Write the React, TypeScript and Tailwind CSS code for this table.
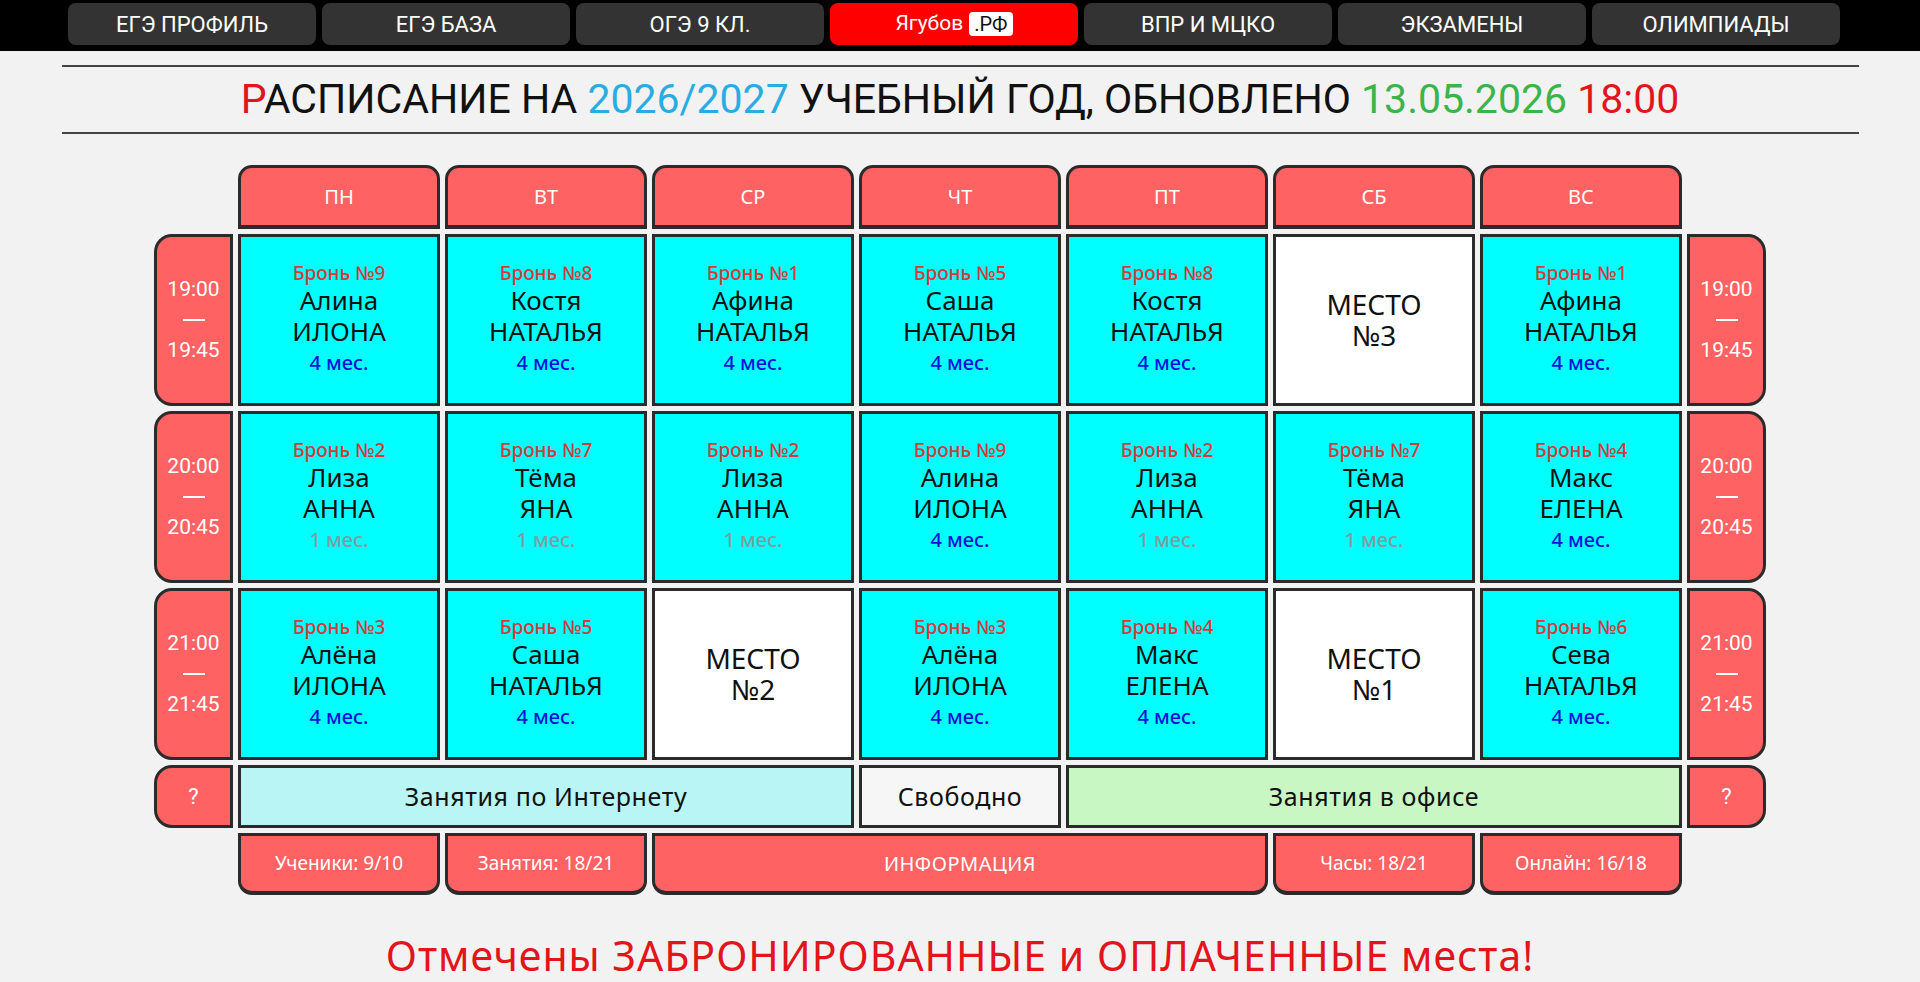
import React from "react";

const NAV = ["ЕГЭ ПРОФИЛЬ", "ЕГЭ БАЗА", "ОГЭ 9 КЛ.", "brand", "ВПР И МЦКО", "ЭКЗАМЕНЫ", "ОЛИМПИАДЫ"];
const DAYS = ["ПН", "ВТ", "СР", "ЧТ", "ПТ", "СБ", "ВС"];

type Slot = { bron?: number; name?: string; teacher?: string; months?: number; free?: number };

const b = (bron: number, name: string, teacher: string, months: number): Slot => ({ bron, name, teacher, months });

const ROWS: { from: string; to: string; slots: Slot[] }[] = [
  {
    from: "19:00",
    to: "19:45",
    slots: [
      b(9, "Алина", "ИЛОНА", 4),
      b(8, "Костя", "НАТАЛЬЯ", 4),
      b(1, "Афина", "НАТАЛЬЯ", 4),
      b(5, "Саша", "НАТАЛЬЯ", 4),
      b(8, "Костя", "НАТАЛЬЯ", 4),
      { free: 3 },
      b(1, "Афина", "НАТАЛЬЯ", 4),
    ],
  },
  {
    from: "20:00",
    to: "20:45",
    slots: [
      b(2, "Лиза", "АННА", 1),
      b(7, "Тёма", "ЯНА", 1),
      b(2, "Лиза", "АННА", 1),
      b(9, "Алина", "ИЛОНА", 4),
      b(2, "Лиза", "АННА", 1),
      b(7, "Тёма", "ЯНА", 1),
      b(4, "Макс", "ЕЛЕНА", 4),
    ],
  },
  {
    from: "21:00",
    to: "21:45",
    slots: [
      b(3, "Алёна", "ИЛОНА", 4),
      b(5, "Саша", "НАТАЛЬЯ", 4),
      { free: 2 },
      b(3, "Алёна", "ИЛОНА", 4),
      b(4, "Макс", "ЕЛЕНА", 4),
      { free: 1 },
      b(6, "Сева", "НАТАЛЬЯ", 4),
    ],
  },
];

const redBox = "bg-[#ff6262] border-[3px] border-[#2b2b2b] flex items-center justify-center text-white";

const TimeCell = ({ from, to, side }: { from: string; to: string; side: "l" | "r" }) => (
  <div
    className={`${redBox} flex-col font-['Roboto',sans-serif] text-[21px] leading-[31px] ${
      side === "l" ? "rounded-l-[18px]" : "rounded-r-[18px]"
    }`}
  >
    <span>{from}</span>
    <span className="block w-[22px] h-[2px] bg-white my-[14px]" />
    <span>{to}</span>
  </div>
);

const SlotCell = ({ s }: { s: Slot }) => {
  if (s.free) {
    return (
      <div className="bg-white border-[3px] border-[#2b2b2b] flex flex-col items-center justify-center text-[28px] leading-[31px] text-[#111]">
        <span>МЕСТО</span>
        <span>№{s.free}</span>
      </div>
    );
  }
  return (
    <div className="bg-[#00ffff] border-[3px] border-[#2b2b2b] flex flex-col items-center justify-center text-[#111]">
      <span className="text-[19px] leading-[24px] font-medium text-[#d23c3c]">Бронь №{s.bron}</span>
      <span className="text-[26px] leading-[31px]">{s.name}</span>
      <span className="text-[26px] leading-[31px]">{s.teacher}</span>
      <span className={`text-[20px] leading-[32px] font-medium ${s.months === 1 ? "text-[#7d9e9e]" : "text-[#0a14d8]"}`}>
        {s.months} мес.
      </span>
    </div>
  );
};

export default function App() {
  return (
    <div className="min-h-screen bg-[#f2f2f2] font-['Noto_Sans','Open_Sans',sans-serif]">
      {/* nav */}
      <nav className="h-[51px] bg-black flex justify-start gap-[6px] pt-[3px] pl-[68px] font-['Roboto',sans-serif]">
        {NAV.map((n) =>
          n === "brand" ? (
            <div key={n} className="w-[248px] h-[42px] rounded-[8px] bg-[#ff0000] flex items-center justify-center gap-[6px] text-white text-[21px]">
              <span>Ягубов</span>
              <span className="bg-white text-[#111] rounded-[4px] px-[5px] leading-[24px] text-[20px]">.РФ</span>
            </div>
          ) : (
            <div key={n} className="w-[248px] h-[42px] rounded-[8px] bg-[#333333] flex items-center justify-center text-white text-[22px]">
              {n}
            </div>
          )
        )}
      </nav>

      {/* title */}
      <div className="w-[1797px] mx-auto mt-[14px] border-t-2 border-b-2 border-[#444] h-[69px] flex items-center justify-center">
        <h1 className="text-[41px] text-[#111] leading-none font-['Roboto',sans-serif]">
          <span className="text-[#e3141c]">Р</span>АСПИСАНИЕ НА <span className="text-[#2aace2]">2026/2027</span> УЧЕБНЫЙ ГОД, ОБНОВЛЕНО{" "}
          <span className="text-[#3bb54a]">13.05.2026</span> <span className="text-[#e3141c]">18:00</span>
        </h1>
      </div>

      {/* schedule grid */}
      <div className="mt-[31px] mx-auto w-[1612px] grid grid-cols-[79px_repeat(7,202px)_79px] grid-rows-[64px_172px_172px_172px_63px_62px] gap-[5px]">
        <div />
        {DAYS.map((d) => (
          <div key={d} className={`${redBox} border-b-4 rounded-t-[14px] text-[20px]`}>
            {d}
          </div>
        ))}
        <div />

        {ROWS.map((r) => (
          <React.Fragment key={r.from}>
            <TimeCell from={r.from} to={r.to} side="l" />
            {r.slots.map((s, i) => (
              <SlotCell key={i} s={s} />
            ))}
            <TimeCell from={r.from} to={r.to} side="r" />
          </React.Fragment>
        ))}

        {/* legend */}
        <div className={`${redBox} rounded-l-[18px] text-[22px] font-['Roboto',sans-serif]`}>?</div>
        <div className="col-span-3 bg-[#b9f5f4] border-[3px] border-[#2b2b2b] flex items-center justify-center text-[25px] tracking-[0.6px] text-[#111]">
          Занятия по Интернету
        </div>
        <div className="bg-[#f6f6f6] border-[3px] border-[#2b2b2b] flex items-center justify-center text-[25px] tracking-[0.6px] text-[#111]">
          Свободно
        </div>
        <div className="col-span-3 bg-[#c9f7c4] border-[3px] border-[#2b2b2b] flex items-center justify-center text-[25px] tracking-[0.6px] text-[#111]">
          Занятия в офисе
        </div>
        <div className={`${redBox} rounded-r-[18px] text-[22px] font-['Roboto',sans-serif]`}>?</div>

        {/* info */}
        <div />
        <div className={`${redBox} border-b-4 rounded-b-[14px] text-[19px]`}>Ученики: 9/10</div>
        <div className={`${redBox} border-b-4 rounded-b-[14px] text-[19px]`}>Занятия: 18/21</div>
        <div className={`${redBox} col-span-3 border-b-4 rounded-b-[14px] text-[20px] tracking-[0.5px]`}>ИНФОРМАЦИЯ</div>
        <div className={`${redBox} border-b-4 rounded-b-[14px] text-[19px]`}>Часы: 18/21</div>
        <div className={`${redBox} border-b-4 rounded-b-[14px] text-[19px]`}>Онлайн: 16/18</div>
        <div />
      </div>

      <p className="mt-[38px] text-center text-[41px] leading-[44px] tracking-[1px] text-[#e3141c]">
        Отмечены ЗАБРОНИРОВАННЫЕ и ОПЛАЧЕННЫЕ места!
      </p>
    </div>
  );
}
